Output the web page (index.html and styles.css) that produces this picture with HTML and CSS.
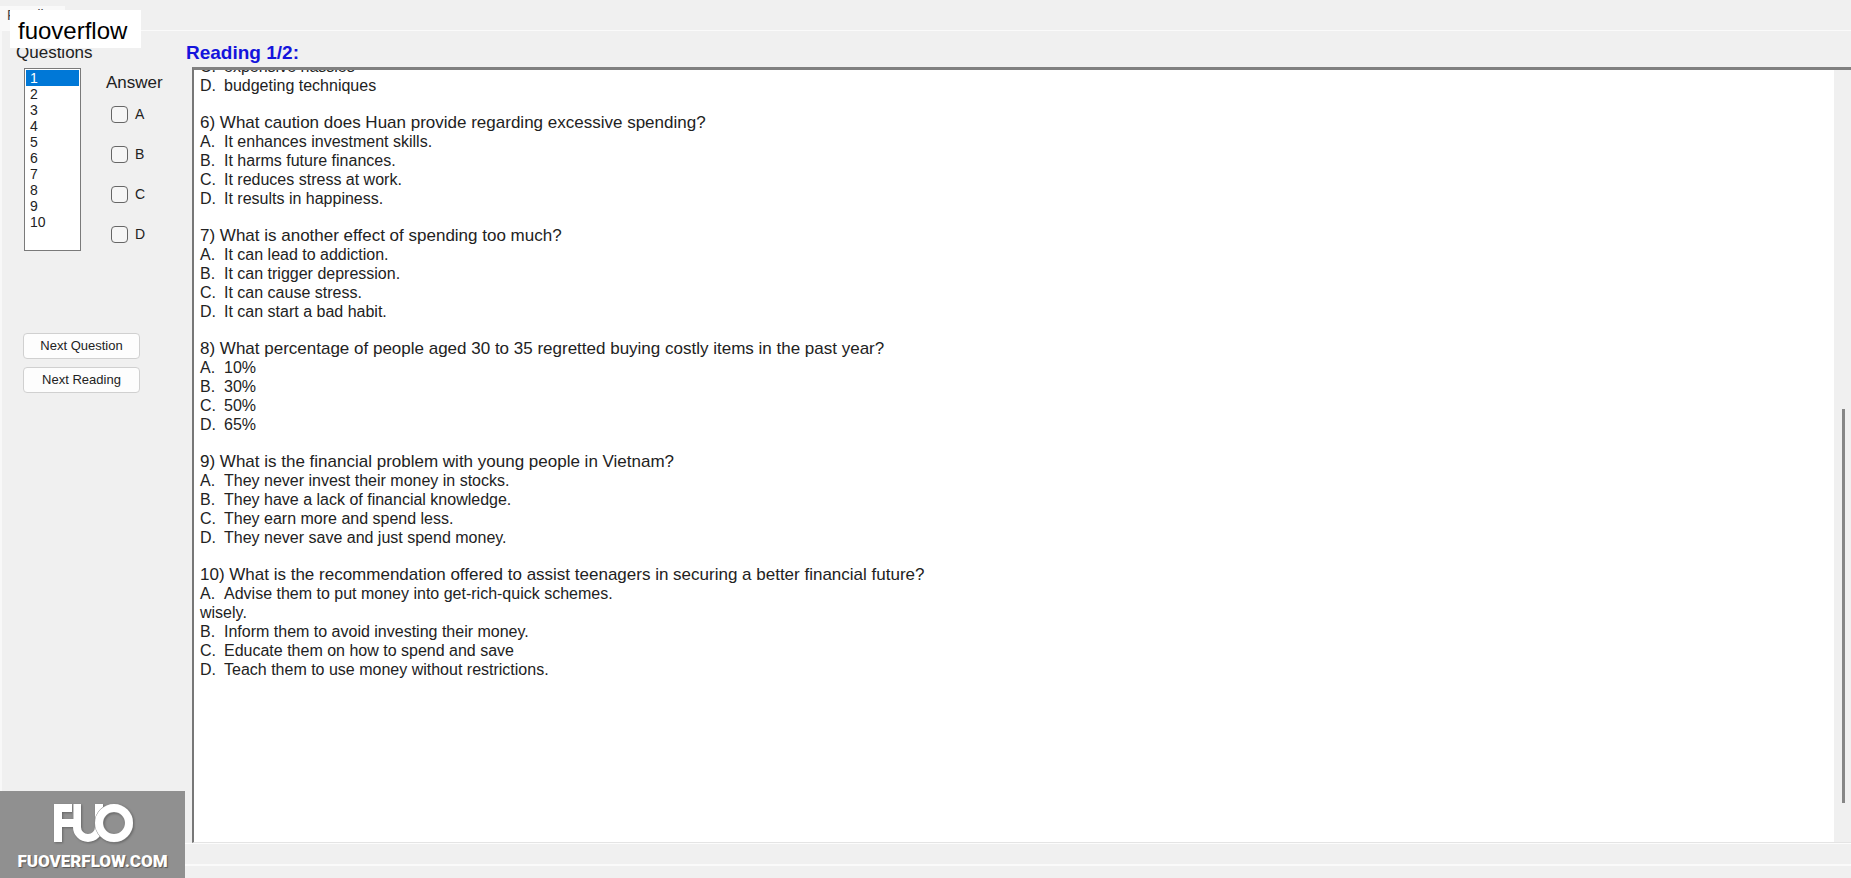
FILE: index.html
```html
<!DOCTYPE html>
<html lang="en">
<head>
<meta charset="utf-8">
<title>Reading</title>
<link rel="stylesheet" href="styles.css">
</head>
<body class="app">
  <nav class="tabs"><button class="tab" type="button">Reading</button></nav>
  <main class="page">
    <aside class="sidebar">
      <div class="pick">
        <div class="questions">
          <label class="caption" for="question">Questions</label>
          <select class="list" id="question" size="10">
            <option class="item current">1</option>
            <option class="item">2</option>
            <option class="item">3</option>
            <option class="item">4</option>
            <option class="item">5</option>
            <option class="item">6</option>
            <option class="item">7</option>
            <option class="item">8</option>
            <option class="item">9</option>
            <option class="item">10</option>
          </select>
        </div>
        <fieldset class="answers">
          <legend class="caption legend">Answer</legend>
          <label class="choice"><input class="tick" type="checkbox">A</label>
          <label class="choice"><input class="tick" type="checkbox">B</label>
          <label class="choice"><input class="tick" type="checkbox">C</label>
          <label class="choice"><input class="tick" type="checkbox">D</label>
        </fieldset>
      </div>
      <div class="actions">
        <button class="btn" type="button">Next Question</button>
        <button class="btn" type="button">Next Reading</button>
      </div>
    </aside>
    <section class="reading">
      <h1 class="title">Reading 1/2:</h1>
      <div class="viewer">
        <div class="text">
          <div class="block">
            <p class="opt"><span class="key">C.</span>expensive hassles</p>
            <p class="opt"><span class="key">D.</span>budgeting techniques</p>
          </div>
          <div class="block">
            <h2 class="ask">6) What caution does Huan provide regarding excessive spending?</h2>
            <p class="opt"><span class="key">A.</span>It enhances investment skills.</p>
            <p class="opt"><span class="key">B.</span>It harms future finances.</p>
            <p class="opt"><span class="key">C.</span>It reduces stress at work.</p>
            <p class="opt"><span class="key">D.</span>It results in happiness.</p>
          </div>
          <div class="block">
            <h2 class="ask">7) What is another effect of spending too much?</h2>
            <p class="opt"><span class="key">A.</span>It can lead to addiction.</p>
            <p class="opt"><span class="key">B.</span>It can trigger depression.</p>
            <p class="opt"><span class="key">C.</span>It can cause stress.</p>
            <p class="opt"><span class="key">D.</span>It can start a bad habit.</p>
          </div>
          <div class="block">
            <h2 class="ask">8) What percentage of people aged 30 to 35 regretted buying costly items in the past year?</h2>
            <p class="opt"><span class="key">A.</span>10%</p>
            <p class="opt"><span class="key">B.</span>30%</p>
            <p class="opt"><span class="key">C.</span>50%</p>
            <p class="opt"><span class="key">D.</span>65%</p>
          </div>
          <div class="block">
            <h2 class="ask">9) What is the financial problem with young people in Vietnam?</h2>
            <p class="opt"><span class="key">A.</span>They never invest their money in stocks.</p>
            <p class="opt"><span class="key">B.</span>They have a lack of financial knowledge.</p>
            <p class="opt"><span class="key">C.</span>They earn more and spend less.</p>
            <p class="opt"><span class="key">D.</span>They never save and just spend money.</p>
          </div>
          <div class="block">
            <h2 class="ask">10) What is the recommendation offered to assist teenagers in securing a better financial future?</h2>
            <p class="opt"><span class="key">A.</span>Advise them to put money into get-rich-quick schemes.</p>
            <p class="opt">wisely.</p>
            <p class="opt"><span class="key">B.</span>Inform them to avoid investing their money.</p>
            <p class="opt"><span class="key">C.</span>Educate them on how to spend and save</p>
            <p class="opt"><span class="key">D.</span>Teach them to use money without restrictions.</p>
          </div>
        </div>
        <div class="track"><div class="thumb"></div></div>
      </div>
    </section>
  </main>
  <footer class="status"></footer>
  <div class="watermark">fuoverflow</div>
  <div class="brand">
    <svg class="logo" viewBox="0 0 80 40" width="80" height="40" aria-label="FUO">
      <g fill="#fff">
        <rect x="1" y="1" width="8" height="38"/>
        <rect x="1" y="1" width="18" height="8"/>
        <rect x="1" y="16" width="20" height="8"/>
      </g>
      <g fill="none" stroke="#fff" stroke-width="8">
        <line x1="24" y1="1" x2="24" y2="24"/>
        <line x1="46" y1="1" x2="46" y2="24"/>
        <circle cx="35" cy="24" r="11" stroke-dasharray="35 35"/>
        <circle cx="61" cy="20" r="15" stroke="#909090" stroke-width="9"/>
        <circle cx="61" cy="20" r="15"/>
      </g>
      <line x1="20" y1="1" x2="20" y2="16" stroke="#909090"/>
    </svg>
    <span class="site">FUOVERFLOW.COM</span>
  </div>
</body>
</html>
```
FILE: styles.css
```css
* { box-sizing: border-box; margin: 0; }

.app {
  display: flex;
  flex-direction: column;
  min-height: 100vh;
  background: #f0f0f0;
  color: #222;
  font: 16px/19px "Liberation Sans", Arial, sans-serif;
}

.tabs { height: 30px; padding-top: 5px; }
.tab {
  width: 65px;
  height: 25px;
  padding: 0 0 6px 7px;
  border: 0;
  background: #f9f9f9;
  color: #444;
  font: 14px/16px "Liberation Sans", Arial, sans-serif;
  text-align: left;
}

.page {
  display: flex;
  flex: 1;
  border-top: 1px solid #fafafa;
  border-left: 2px solid #f8f8f8;
}

.sidebar { flex: none; width: 184px; padding-top: 11px; }
.caption { font-size: 17px; line-height: 22px; }
.pick { display: flex; padding-left: 14px; }
.questions { display: flex; flex-direction: column; gap: 4px; width: 80px; }
.list {
  width: 57px;
  height: 183px;
  margin-left: 8px;
  padding: 1px;
  border: 1px solid #7a7a7a;
  border-radius: 0;
  background: #fff;
  color: #222;
  font: 14px/16px "Liberation Sans", Arial, sans-serif;
  overflow: hidden;
  outline: 0;
}
.item { min-height: 16px; padding: 0 4px; line-height: 16px; }
.current { background: #0078d7; color: #fff; }

.answers {
  display: flex;
  flex-direction: column;
  gap: 20px;
  padding: 30px 0 0 8px;
  border: 0;
}
.legend { float: left; height: 24px; margin-bottom: -12px; }
.choice { display: flex; align-items: center; gap: 7px; height: 20px; margin-left: 7px; font-size: 14px; }
.tick {
  appearance: none;
  width: 17px;
  height: 17px;
  border: 1px solid #666;
  border-radius: 4px;
  background: #f6f6f6;
}

.actions { display: flex; flex-direction: column; gap: 8px; width: 117px; margin: 82px 0 0 21px; }
.btn {
  height: 26px;
  border: 1px solid #d0d0d0;
  border-radius: 4px;
  background: #fdfdfd;
  color: #222;
  font: 13px/16px "Liberation Sans", Arial, sans-serif;
}

.reading { display: flex; flex: 1; flex-direction: column; min-width: 0; }
.title { padding: 11px 0 3px; color: #1414dc; font-size: 19px; line-height: 22px; }
.viewer {
  display: flex;
  flex: 1 1 0;
  margin-left: 6px;
  border-top: 3px solid #808080;
  border-left: 2px solid #777;
  border-bottom: 1px solid #e4e4e4;
  background: #fff;
  overflow: hidden;
}
.text { display: flex; flex: 1; flex-direction: column; gap: 18px; margin-top: -13px; padding-left: 6px; }
.ask { font-size: 17px; font-weight: 400; line-height: 19px; }
.key { display: inline-block; width: 24px; }
.track { width: 17px; padding: 339px 6px 39px 8px; background: #f0f0f0; }
.thumb { height: 100%; background: #868686; }

.status { height: 35px; padding-top: 20px; border-top: 1px solid #fcfcfc; }
.status::before { content: ""; display: block; height: 2px; background: #fafafa; }

.watermark {
  position: absolute;
  top: 10px;
  left: 10px;
  padding: 8px 14px 4px 8px;
  background: #fff;
  color: #000;
  font-size: 24px;
  line-height: 26px;
}

.brand {
  position: absolute;
  bottom: 0;
  left: 0;
  display: flex;
  flex-direction: column;
  align-items: center;
  gap: 8px;
  width: 185px;
  height: 87px;
  padding-top: 12px;
  background: #909090;
}
.logo { filter: drop-shadow(1px 1px 1px #666); }
.site { color: #fff; font: 900 17px/20px Roboto, sans-serif; text-shadow: 1px 1px 1px #555; }
```
